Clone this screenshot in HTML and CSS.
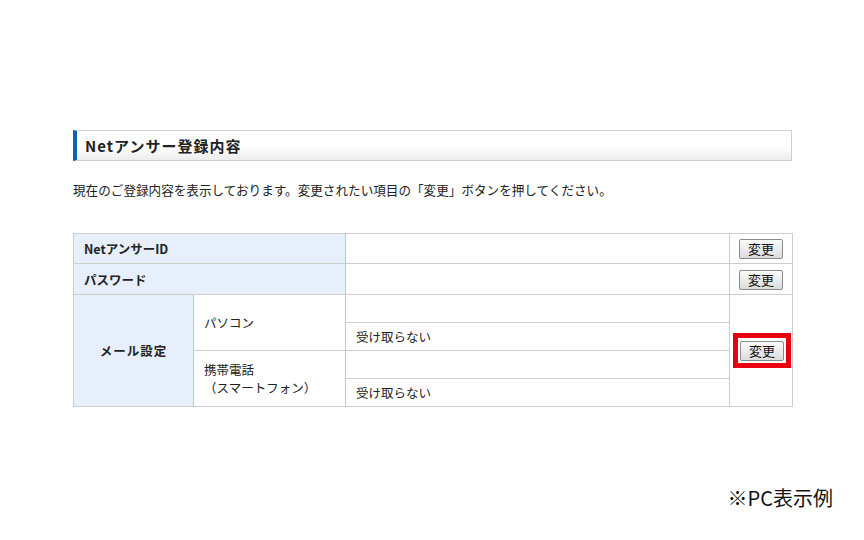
FILE: index.html
```html
<!DOCTYPE html>
<html lang="ja">
<head>
    <meta charset="UTF-8">
    <meta name="viewport" content="width=device-width, initial-scale=1.0">
    <title>Netアンサー登録内容</title>
    <link rel="stylesheet" href="styles.css">
</head>
<body>

    <div class="page">
        <!-- 見出し -->
        <h2 class="section-title">Netアンサー登録内容</h2>

        <p class="lead">現在のご登録内容を表示しております。変更されたい項目の「変更」ボタンを押してください。</p>

        <!-- 登録内容テーブル -->
        <table class="info-table">
            <colgroup>
                <col class="col-head">
                <col class="col-sub">
                <col class="col-value">
                <col class="col-btn">
            </colgroup>
            <tr class="row-main">
                <th colspan="2">NetアンサーID</th>
                <td></td>
                <td class="cell-btn"><button class="btn-change">変更</button></td>
            </tr>
            <tr class="row-main row-2">
                <th colspan="2">パスワード</th>
                <td></td>
                <td class="cell-btn"><button class="btn-change">変更</button></td>
            </tr>
            <tr class="row-sub">
                <th rowspan="4" class="th-center">メール設定</th>
                <th rowspan="2" class="th-sub">パソコン</th>
                <td></td>
                <td rowspan="4" class="cell-btn">
                    <span class="highlight"><button class="btn-change">変更</button></span>
                </td>
            </tr>
            <tr class="row-sub">
                <td>受け取らない</td>
            </tr>
            <tr class="row-sub">
                <th rowspan="2" class="th-sub">携帯電話<br>（スマートフォン）</th>
                <td></td>
            </tr>
            <tr class="row-sub">
                <td>受け取らない</td>
            </tr>
        </table>
    </div>

    <p class="note">※PC表示例</p>

</body>
</html>
```

FILE: styles.css
```css
/* 全体 */
body {
    margin: 0;
    background-color: #fff;
    font-family: "Noto Sans CJK JP", "DejaVu Sans", sans-serif;
    color: #222;
}

.page {
    width: 719px;
    margin-left: 73px;
    padding-top: 130px;
}

/* 見出しバー */
.section-title {
    box-sizing: border-box;
    height: 31px;
    margin: 0;
    padding-left: 8px;
    border: 1px solid #cfcfcf;
    border-left: 4px solid #1160b8;
    background: linear-gradient(#fff 55%, #ececec);
    font-size: 15px;
    font-weight: bold;
    letter-spacing: 1px;
    line-height: 29px;
    color: #222;
}

.lead {
    margin: 20px 0 0;
    font-size: 12.6px;
    line-height: 18px;
}

/* テーブル */
.info-table {
    width: 719px;
    margin-top: 34px;
    border-collapse: collapse;
    table-layout: fixed;
    font-size: 12.5px;
}

.col-head  { width: 120px; }
.col-sub   { width: 152px; }
.col-value { width: 384px; }
.col-btn   { width: 63px; }

.info-table th,
.info-table td {
    border: 1px solid #cdcdcd;
    padding: 0 10px;
    text-align: left;
    vertical-align: middle;
}

.info-table th {
    background-color: #e6effb;
    border-right-color: #b4c9e8;
    font-weight: bold;
}

.info-table th.th-center {
    text-align: center;
    padding: 0;
    letter-spacing: 1px;
}

.info-table th.th-sub {
    background-color: #fff;
    font-weight: normal;
    line-height: 18px;
}

.row-main   { height: 30px; }
.row-2      { height: 31px; }
.row-sub    { height: 28px; }

.info-table .cell-btn {
    padding: 0;
    text-align: center;
}

/* 変更ボタン */
.btn-change {
    width: 44px;
    height: 20px;
    padding: 0;
    border: 1px solid #8a8a8a;
    border-radius: 2px;
    background: linear-gradient(#fbfbfb, #dcdcdc);
    font-family: "Noto Sans CJK JP", sans-serif;
    font-size: 13px;
    line-height: 18px;
    color: #111;
    vertical-align: middle;
}

/* 赤枠 */
.highlight {
    display: inline-block;
    margin-left: 2px;
    padding: 3px 2px 2px;
    border: 5px solid #e8000f;
    line-height: 0;
}

.note {
    margin: 79px 31px 0 0;
    text-align: right;
    font-size: 20px;
    line-height: 24px;
    color: #111;
}
```
